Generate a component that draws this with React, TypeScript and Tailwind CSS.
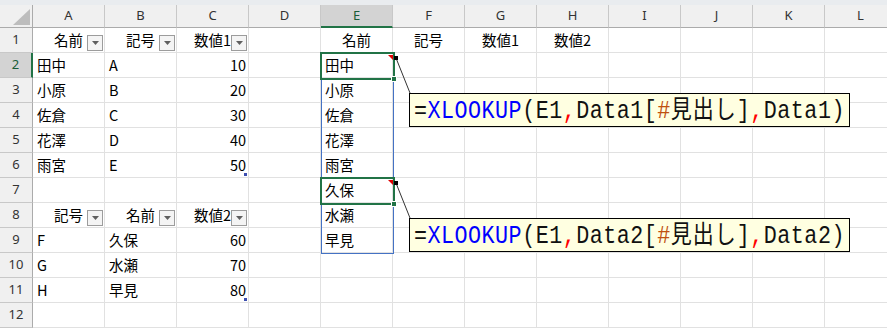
import React from 'react';

const COLS = ['A', 'B', 'C', 'D', 'E', 'F', 'G', 'H', 'I', 'J', 'K', 'L'];

type C = { v: string; a?: 'l' | 'r' | 'c'; f?: boolean; end?: boolean };

const L = (v: string): C => ({ v, a: 'l' });
const R = (v: string, end = false): C => ({ v, a: 'r', end });
const H = (v: string, f = false): C => ({ v, a: 'c', f });

const ROWS: (C | null)[][] = [
  [H('名前', true), H('記号', true), H('数値1', true), null, H('名前'), H('記号'), H('数値1'), H('数値2')],
  [L('田中'), L('A'), R('10'), null, L('田中')],
  [L('小原'), L('B'), R('20'), null, L('小原')],
  [L('佐倉'), L('C'), R('30'), null, L('佐倉')],
  [L('花澤'), L('D'), R('40'), null, L('花澤')],
  [L('雨宮'), L('E'), R('50', true), null, L('雨宮')],
  [null, null, null, null, L('久保')],
  [H('記号', true), H('名前', true), H('数値2', true), null, L('水瀬')],
  [L('F'), L('久保'), R('60'), null, L('早見')],
  [L('G'), L('水瀬'), R('70')],
  [L('H'), L('早見'), R('80', true)],
  [],
];

function FilterBtn() {
  return (
    <span className="absolute right-[1px] bottom-[1px] w-4 h-4 border border-[#9c9c9c] bg-[#f4f4f4] flex items-center justify-center">
      <svg width="7" height="4" viewBox="0 0 7 4">
        <path d="M0 0 H7 L3.5 4 Z" fill="#5f5f5f" />
      </svg>
    </span>
  );
}

function Cell({ c }: { c: C | null }) {
  const align = !c
    ? ''
    : c.a === 'r'
    ? 'justify-end pr-[2px]'
    : c.a === 'c'
    ? 'justify-center'
    : 'justify-start pl-[4px]';
  return (
    <div className={`relative flex items-center border-r border-b border-[#e1e1e1] whitespace-nowrap ${align}`}>
      {c?.v}
      {c?.f && <FilterBtn />}
      {c?.end && <span className="absolute right-[1px] bottom-[1px] w-[3px] h-[3px] bg-[#3d4fb0]" />}
    </div>
  );
}

// formula callout, Latin in mono and the CJK part a bit narrower
function Callout({ n, top }: { n: string; top: string }) {
  return (
    <div
      className={`absolute left-[409px] ${top} w-[441px] h-[34px] bg-[#ffffe1] border border-black flex items-center pl-[4px] text-[#111]`}
    >
      <span className="inline-block scale-y-[1.2] whitespace-nowrap text-[21.7px] tracking-[0.5px] leading-none font-['Liberation_Mono','Noto_Sans_CJK_JP',monospace]">
        =<span className="text-[#0000ff]">XLOOKUP</span>(E1<span className="text-[#ff0000]">,</span>Data{n}[
        <span className="text-[#c0500f]">#</span>
        <span className="font-['Noto_Sans_CJK_JP',sans-serif] text-[21px] tracking-[1px]">見出し</span>]
        <span className="text-[#ff0000]">,</span>Data{n})
      </span>
    </div>
  );
}

export default function App() {
  return (
    <div className="relative w-[887px] h-[334px] overflow-hidden bg-white text-[14.5px] text-black font-['Noto_Sans_CJK_JP','Noto_Sans',sans-serif]">
      <div className="h-[5px] bg-[#e9ecef]" />
      <div className="grid grid-cols-[33px_repeat(12,72px)] grid-rows-[23px_repeat(12,25px)]">
        {/* corner */}
        <div className="relative bg-[#f0f0f0] border-r border-b border-[#ababab]">
          <svg className="absolute right-[2px] bottom-[2px]" width="17" height="16" viewBox="0 0 17 16">
            <path d="M17 0 V16 H0 Z" fill="#bdbdbd" />
          </svg>
        </div>
        {COLS.map((c) =>
          c === 'E' ? (
            <div
              key={c}
              className="flex items-center justify-center bg-[#d3d3d3] border-r border-[#c8c8c8] border-b-2 border-b-[#217346] text-[13px] text-[#185c37] font-['Noto_Sans',sans-serif]"
            >
              {c}
            </div>
          ) : (
            <div
              key={c}
              className="flex items-center justify-center bg-[#f0f0f0] border-r border-[#c8c8c8] border-b border-b-[#ababab] text-[13px] text-[#333] font-['Noto_Sans',sans-serif]"
            >
              {c}
            </div>
          )
        )}
        {ROWS.map((row, i) => (
          <React.Fragment key={i}>
            {i === 1 ? (
              <div className="flex items-center justify-center bg-[#d3d3d3] border-b border-[#c8c8c8] border-r-2 border-r-[#217346] text-[13px] text-[#185c37] font-['Noto_Sans',sans-serif]">
                {i + 1}
              </div>
            ) : (
              <div className="flex items-center justify-center bg-[#f0f0f0] border-b border-[#c8c8c8] border-r border-r-[#ababab] text-[13px] text-[#333] font-['Noto_Sans',sans-serif]">
                {i + 1}
              </div>
            )}
            {COLS.map((_, j) => (
              <Cell key={j} c={row[j] ?? null} />
            ))}
          </React.Fragment>
        ))}
      </div>

      {/* spill range + active cells */}
      <div className="absolute left-[321px] top-[53px] w-[73px] h-[201px] border border-[#4472c4]" />
      <div className="absolute left-[320px] top-[52px] w-[75px] h-[28px] border-2 border-[#217346]" />
      <div className="absolute left-[391px] top-[76px] w-[6px] h-[6px] bg-[#217346] border border-white" />
      <div className="absolute left-[320px] top-[177px] w-[75px] h-[28px] border-2 border-[#217346]" />
      <div className="absolute left-[391px] top-[201px] w-[6px] h-[6px] bg-[#217346] border border-white" />

      <svg className="absolute left-0 top-0" width="887" height="334">
        <path d="M388 55 H393 V60 Z" fill="#e00000" />
        <path d="M388 180 H393 V185 Z" fill="#e00000" />
        <line x1="396" y1="58" x2="410" y2="93" stroke="#333" strokeWidth="1" />
        <line x1="396" y1="183" x2="410" y2="218" stroke="#333" strokeWidth="1" />
        <rect x="394" y="56" width="4" height="4" fill="#000" />
        <rect x="394" y="181" width="4" height="4" fill="#000" />
      </svg>

      <Callout n="1" top="top-[93px]" />
      <Callout n="2" top="top-[218px]" />
    </div>
  );
}
